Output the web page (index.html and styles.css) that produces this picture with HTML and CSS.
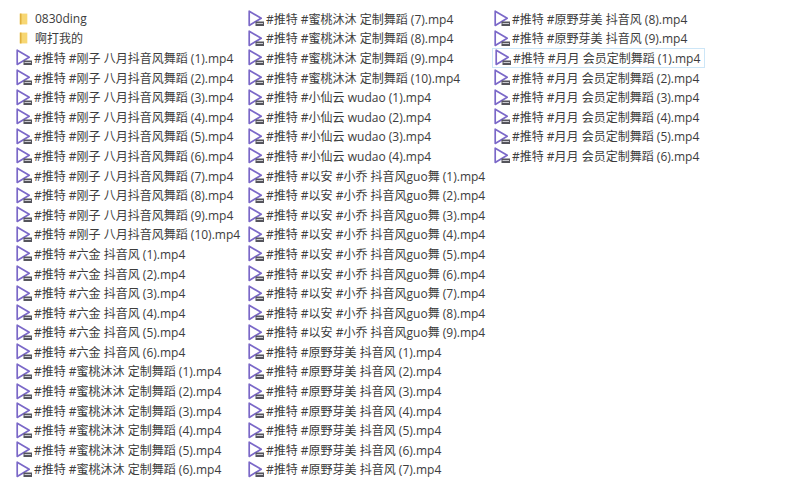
FILE: index.html
```html
<!DOCTYPE html>
<html lang="zh-CN">
<head>
  <meta charset="UTF-8">
  <title>文件列表</title>
  <link rel="stylesheet" href="styles.css">
</head>
<body>

  <svg class="defs" width="0" height="0">
    <symbol id="video" viewBox="0 0 17 17">
      <path d="M1.2 1.2 L13.2 8.2 L1.2 15.4 Z" fill="none" stroke="#7b68c8" stroke-width="1.7" stroke-linejoin="round"/>
      <rect x="7.5" y="11.5" width="8.5" height="4.5" fill="#55555c"/>
      <rect x="8.5" y="13" width="6.5" height="1" fill="#c9c9cf"/>
    </symbol>
    <symbol id="folder" viewBox="0 0 12 14">
      <path d="M1 0.5 H10 V13.5 H1 Z" fill="#f7d774"/>
      <path d="M1 0.5 H3 V13.5 H1 Z" fill="#e0b03c"/>
    </symbol>
  </svg>

  <div class="lista">

    <!-- Coluna 1 -->
    <div class="coluna col1">
      <div class="item pasta"><svg class="ico-pasta"><use href="#folder"/></svg><span>0830ding</span></div>
      <div class="item pasta"><svg class="ico-pasta"><use href="#folder"/></svg><span>啊打我的</span></div>
      <div class="item"><svg class="ico"><use href="#video"/></svg><span>#推特 #刚子 八月抖音风舞蹈 (1).mp4</span></div>
      <div class="item"><svg class="ico"><use href="#video"/></svg><span>#推特 #刚子 八月抖音风舞蹈 (2).mp4</span></div>
      <div class="item"><svg class="ico"><use href="#video"/></svg><span>#推特 #刚子 八月抖音风舞蹈 (3).mp4</span></div>
      <div class="item"><svg class="ico"><use href="#video"/></svg><span>#推特 #刚子 八月抖音风舞蹈 (4).mp4</span></div>
      <div class="item"><svg class="ico"><use href="#video"/></svg><span>#推特 #刚子 八月抖音风舞蹈 (5).mp4</span></div>
      <div class="item"><svg class="ico"><use href="#video"/></svg><span>#推特 #刚子 八月抖音风舞蹈 (6).mp4</span></div>
      <div class="item"><svg class="ico"><use href="#video"/></svg><span>#推特 #刚子 八月抖音风舞蹈 (7).mp4</span></div>
      <div class="item"><svg class="ico"><use href="#video"/></svg><span>#推特 #刚子 八月抖音风舞蹈 (8).mp4</span></div>
      <div class="item"><svg class="ico"><use href="#video"/></svg><span>#推特 #刚子 八月抖音风舞蹈 (9).mp4</span></div>
      <div class="item"><svg class="ico"><use href="#video"/></svg><span>#推特 #刚子 八月抖音风舞蹈 (10).mp4</span></div>
      <div class="item"><svg class="ico"><use href="#video"/></svg><span>#推特 #六金 抖音风 (1).mp4</span></div>
      <div class="item"><svg class="ico"><use href="#video"/></svg><span>#推特 #六金 抖音风 (2).mp4</span></div>
      <div class="item"><svg class="ico"><use href="#video"/></svg><span>#推特 #六金 抖音风 (3).mp4</span></div>
      <div class="item"><svg class="ico"><use href="#video"/></svg><span>#推特 #六金 抖音风 (4).mp4</span></div>
      <div class="item"><svg class="ico"><use href="#video"/></svg><span>#推特 #六金 抖音风 (5).mp4</span></div>
      <div class="item"><svg class="ico"><use href="#video"/></svg><span>#推特 #六金 抖音风 (6).mp4</span></div>
      <div class="item"><svg class="ico"><use href="#video"/></svg><span>#推特 #蜜桃沐沐 定制舞蹈 (1).mp4</span></div>
      <div class="item"><svg class="ico"><use href="#video"/></svg><span>#推特 #蜜桃沐沐 定制舞蹈 (2).mp4</span></div>
      <div class="item"><svg class="ico"><use href="#video"/></svg><span>#推特 #蜜桃沐沐 定制舞蹈 (3).mp4</span></div>
      <div class="item"><svg class="ico"><use href="#video"/></svg><span>#推特 #蜜桃沐沐 定制舞蹈 (4).mp4</span></div>
      <div class="item"><svg class="ico"><use href="#video"/></svg><span>#推特 #蜜桃沐沐 定制舞蹈 (5).mp4</span></div>
      <div class="item"><svg class="ico"><use href="#video"/></svg><span>#推特 #蜜桃沐沐 定制舞蹈 (6).mp4</span></div>
    </div>

    <!-- Coluna 2 -->
    <div class="coluna col2">
      <div class="item"><svg class="ico"><use href="#video"/></svg><span>#推特 #蜜桃沐沐 定制舞蹈 (7).mp4</span></div>
      <div class="item"><svg class="ico"><use href="#video"/></svg><span>#推特 #蜜桃沐沐 定制舞蹈 (8).mp4</span></div>
      <div class="item"><svg class="ico"><use href="#video"/></svg><span>#推特 #蜜桃沐沐 定制舞蹈 (9).mp4</span></div>
      <div class="item"><svg class="ico"><use href="#video"/></svg><span>#推特 #蜜桃沐沐 定制舞蹈 (10).mp4</span></div>
      <div class="item"><svg class="ico"><use href="#video"/></svg><span>#推特 #小仙云 wudao (1).mp4</span></div>
      <div class="item"><svg class="ico"><use href="#video"/></svg><span>#推特 #小仙云 wudao (2).mp4</span></div>
      <div class="item"><svg class="ico"><use href="#video"/></svg><span>#推特 #小仙云 wudao (3).mp4</span></div>
      <div class="item"><svg class="ico"><use href="#video"/></svg><span>#推特 #小仙云 wudao (4).mp4</span></div>
      <div class="item"><svg class="ico"><use href="#video"/></svg><span>#推特 #以安 #小乔 抖音风guo舞 (1).mp4</span></div>
      <div class="item"><svg class="ico"><use href="#video"/></svg><span>#推特 #以安 #小乔 抖音风guo舞 (2).mp4</span></div>
      <div class="item"><svg class="ico"><use href="#video"/></svg><span>#推特 #以安 #小乔 抖音风guo舞 (3).mp4</span></div>
      <div class="item"><svg class="ico"><use href="#video"/></svg><span>#推特 #以安 #小乔 抖音风guo舞 (4).mp4</span></div>
      <div class="item"><svg class="ico"><use href="#video"/></svg><span>#推特 #以安 #小乔 抖音风guo舞 (5).mp4</span></div>
      <div class="item"><svg class="ico"><use href="#video"/></svg><span>#推特 #以安 #小乔 抖音风guo舞 (6).mp4</span></div>
      <div class="item"><svg class="ico"><use href="#video"/></svg><span>#推特 #以安 #小乔 抖音风guo舞 (7).mp4</span></div>
      <div class="item"><svg class="ico"><use href="#video"/></svg><span>#推特 #以安 #小乔 抖音风guo舞 (8).mp4</span></div>
      <div class="item"><svg class="ico"><use href="#video"/></svg><span>#推特 #以安 #小乔 抖音风guo舞 (9).mp4</span></div>
      <div class="item"><svg class="ico"><use href="#video"/></svg><span>#推特 #原野芽美 抖音风 (1).mp4</span></div>
      <div class="item"><svg class="ico"><use href="#video"/></svg><span>#推特 #原野芽美 抖音风 (2).mp4</span></div>
      <div class="item"><svg class="ico"><use href="#video"/></svg><span>#推特 #原野芽美 抖音风 (3).mp4</span></div>
      <div class="item"><svg class="ico"><use href="#video"/></svg><span>#推特 #原野芽美 抖音风 (4).mp4</span></div>
      <div class="item"><svg class="ico"><use href="#video"/></svg><span>#推特 #原野芽美 抖音风 (5).mp4</span></div>
      <div class="item"><svg class="ico"><use href="#video"/></svg><span>#推特 #原野芽美 抖音风 (6).mp4</span></div>
      <div class="item"><svg class="ico"><use href="#video"/></svg><span>#推特 #原野芽美 抖音风 (7).mp4</span></div>
    </div>

    <!-- Coluna 3 -->
    <div class="coluna col3">
      <div class="item"><svg class="ico"><use href="#video"/></svg><span>#推特 #原野芽美 抖音风 (8).mp4</span></div>
      <div class="item"><svg class="ico"><use href="#video"/></svg><span>#推特 #原野芽美 抖音风 (9).mp4</span></div>
      <div class="item selecionado"><svg class="ico"><use href="#video"/></svg><span>#推特 #月月 会员定制舞蹈 (1).mp4</span></div>
      <div class="item"><svg class="ico"><use href="#video"/></svg><span>#推特 #月月 会员定制舞蹈 (2).mp4</span></div>
      <div class="item"><svg class="ico"><use href="#video"/></svg><span>#推特 #月月 会员定制舞蹈 (3).mp4</span></div>
      <div class="item"><svg class="ico"><use href="#video"/></svg><span>#推特 #月月 会员定制舞蹈 (4).mp4</span></div>
      <div class="item"><svg class="ico"><use href="#video"/></svg><span>#推特 #月月 会员定制舞蹈 (5).mp4</span></div>
      <div class="item"><svg class="ico"><use href="#video"/></svg><span>#推特 #月月 会员定制舞蹈 (6).mp4</span></div>
    </div>

  </div>

</body>
</html>
```

FILE: styles.css
```css
body {
  margin: 0;
  background: #fff;
  font-family: "Open Sans", "Noto Sans CJK SC", sans-serif;
  font-size: 12px;
  color: #3c3c3c;
  overflow: hidden;
}

.defs {
  display: block;
  height: 0;
}

.lista {
  display: flex;
  padding: 9px 0 0 16px;
}

.coluna {
  display: flex;
  flex-direction: column;
}

.col1 {
  width: 232px;
}

.col2 {
  width: 246px;
}

.item {
  display: flex;
  align-items: center;
  gap: 0;
  height: 19.6px;
  white-space: nowrap;
}

.ico {
  width: 17px;
  height: 17px;
  margin-right: 1px;
  flex: none;
}

.ico-pasta {
  width: 10px;
  height: 12px;
  margin: 0 6px 0 3px;
  flex: none;
}

.selecionado {
  align-self: flex-start;
  box-sizing: border-box;
  margin-left: -2px;
  padding: 0 4px 0 2px;
  border: 1px solid #cde6f7;
}
```
